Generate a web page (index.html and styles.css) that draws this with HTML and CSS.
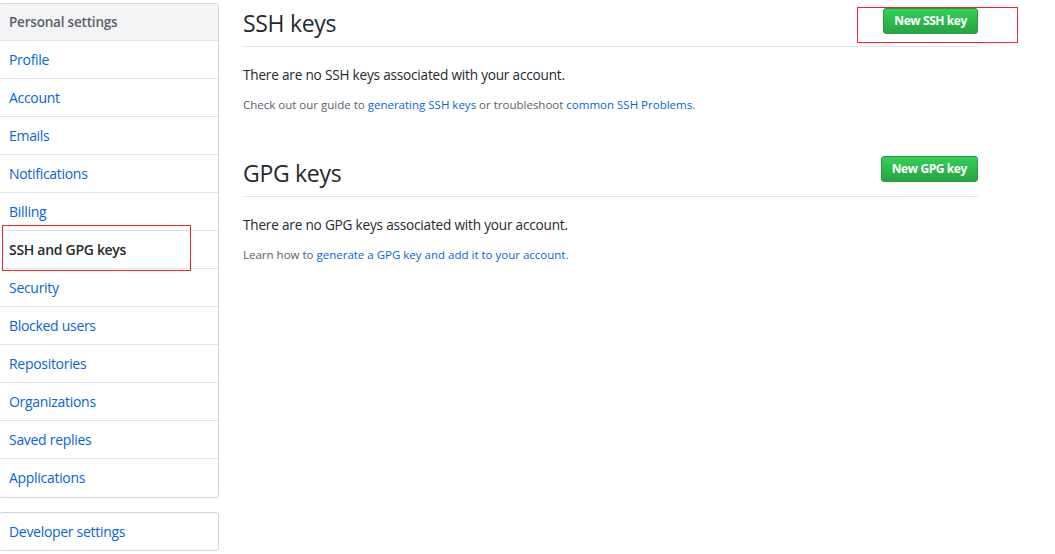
FILE: index.html
```html
<!DOCTYPE html>
<html>
<head>
<meta charset="utf-8">
<link rel="stylesheet" href="styles.css">
</head>
<body>
<div class="page">
  <aside class="side">
    <nav class="menu">
      <div class="menu-head">Personal settings</div>
      <a class="menu-item">Profile</a>
      <a class="menu-item">Account</a>
      <a class="menu-item">Emails</a>
      <a class="menu-item">Notifications</a>
      <a class="menu-item">Billing</a>
      <a class="menu-item selected">SSH and GPG keys<span class="mark mark-side"></span></a>
      <a class="menu-item">Security</a>
      <a class="menu-item">Blocked users</a>
      <a class="menu-item">Repositories</a>
      <a class="menu-item">Organizations</a>
      <a class="menu-item">Saved replies</a>
      <a class="menu-item">Applications</a>
    </nav>
    <nav class="menu dev">
      <a class="menu-item">Developer settings</a>
    </nav>
  </aside>
  <main class="main">
    <section class="block">
      <div class="subhead">
        <h2 class="subhead-title">SSH keys</h2>
        <span class="btn-wrap"><a class="btn">New SSH key</a><span class="mark mark-btn"></span></span>
      </div>
      <p class="lead">There are no SSH keys associated with your account.</p>
      <p class="note">Check out our guide to <a class="link">generating SSH keys</a> or troubleshoot <a class="link">common SSH Problems</a>.</p>
    </section>
    <section class="block gpg">
      <div class="subhead">
        <h2 class="subhead-title">GPG keys</h2>
        <a class="btn">New GPG key</a>
      </div>
      <p class="lead">There are no GPG keys associated with your account.</p>
      <p class="note">Learn how to <a class="link">generate a GPG key and add it to your account</a>.</p>
    </section>
  </main>
</div>
</body>
</html>
```

FILE: styles.css
```css
* { box-sizing: border-box; }
html, body { margin: 0; padding: 0; background: #fff; }
body {
  font-family: "Open Sans", "Noto Sans", sans-serif;
  color: #24292e;
  font-size: 14px;
}
.page {
  display: flex;
  align-items: flex-start;
  padding-top: 3px;
}
.side {
  width: 220px;
  margin-left: -1px;
  flex: none;
}
.menu {
  display: flex;
  flex-direction: column;
  border: 1px solid #d1d5da;
  border-radius: 3px;
  background: #fff;
}
.menu-head {
  height: 37px;
  line-height: 36px;
  padding-left: 9px;
  background: #f3f4f6;
  color: #586069;
  font-size: 13.5px;
  font-weight: 600;
  border-bottom: 1px solid #e1e4e8;
  letter-spacing: -0.2px;
}
.menu-item {
  position: relative;
  display: block;
  height: 38px;
  line-height: 37px;
  padding-left: 9px;
  color: #0366d6;
  font-size: 14px;
  border-bottom: 1px solid #e1e4e8;
  letter-spacing: -0.3px;
}
.menu-item:last-child { border-bottom: none; }
.menu-item.selected {
  color: #24292e;
  font-weight: 600;
}
.dev { margin-top: 14px; }
.dev .menu-item { height: 37px; }
.mark {
  position: absolute;
  border: 1px solid #f0262a;
  pointer-events: none;
}
.mark-side {
  left: 2px;
  top: -6px;
  width: 189px;
  height: 46px;
}
.main {
  width: 735px;
  margin-left: 24px;
}
.subhead {
  display: flex;
  align-items: center;
  justify-content: space-between;
  border-bottom: 1px solid #e1e4e8;
  height: 44px;
}
.subhead-title {
  margin: 0;
  font-size: 23px;
  font-weight: 400;
  letter-spacing: -0.3px;
  line-height: 40px;
  padding-bottom: 4px;
}
.btn-wrap { position: relative; display: flex; }
.btn {
  display: inline-block;
  height: 26px;
  line-height: 24px;
  padding: 0 10px;
  color: #fff;
  font-size: 12px;
  font-weight: 700;
  letter-spacing: -0.4px;
  border: 1px solid #259a3f;
  border-radius: 3px;
  background: linear-gradient(#34d058, #28a745 90%);
  margin-bottom: 7px;
}
.mark-btn {
  left: -26px;
  top: -1px;
  width: 161px;
  height: 36px;
}
.lead {
  margin: 19px 0 0;
  line-height: 18px;
  font-size: 13.6px;
  letter-spacing: -0.2px;
}
.note {
  margin: 13px 0 0;
  font-size: 11.5px;
  line-height: 16px;
  color: #586069;
  letter-spacing: 0;
}
.link { color: #0366d6; }
.gpg { margin-top: 40px; }
.gpg .btn { margin-bottom: 11px; }
```
